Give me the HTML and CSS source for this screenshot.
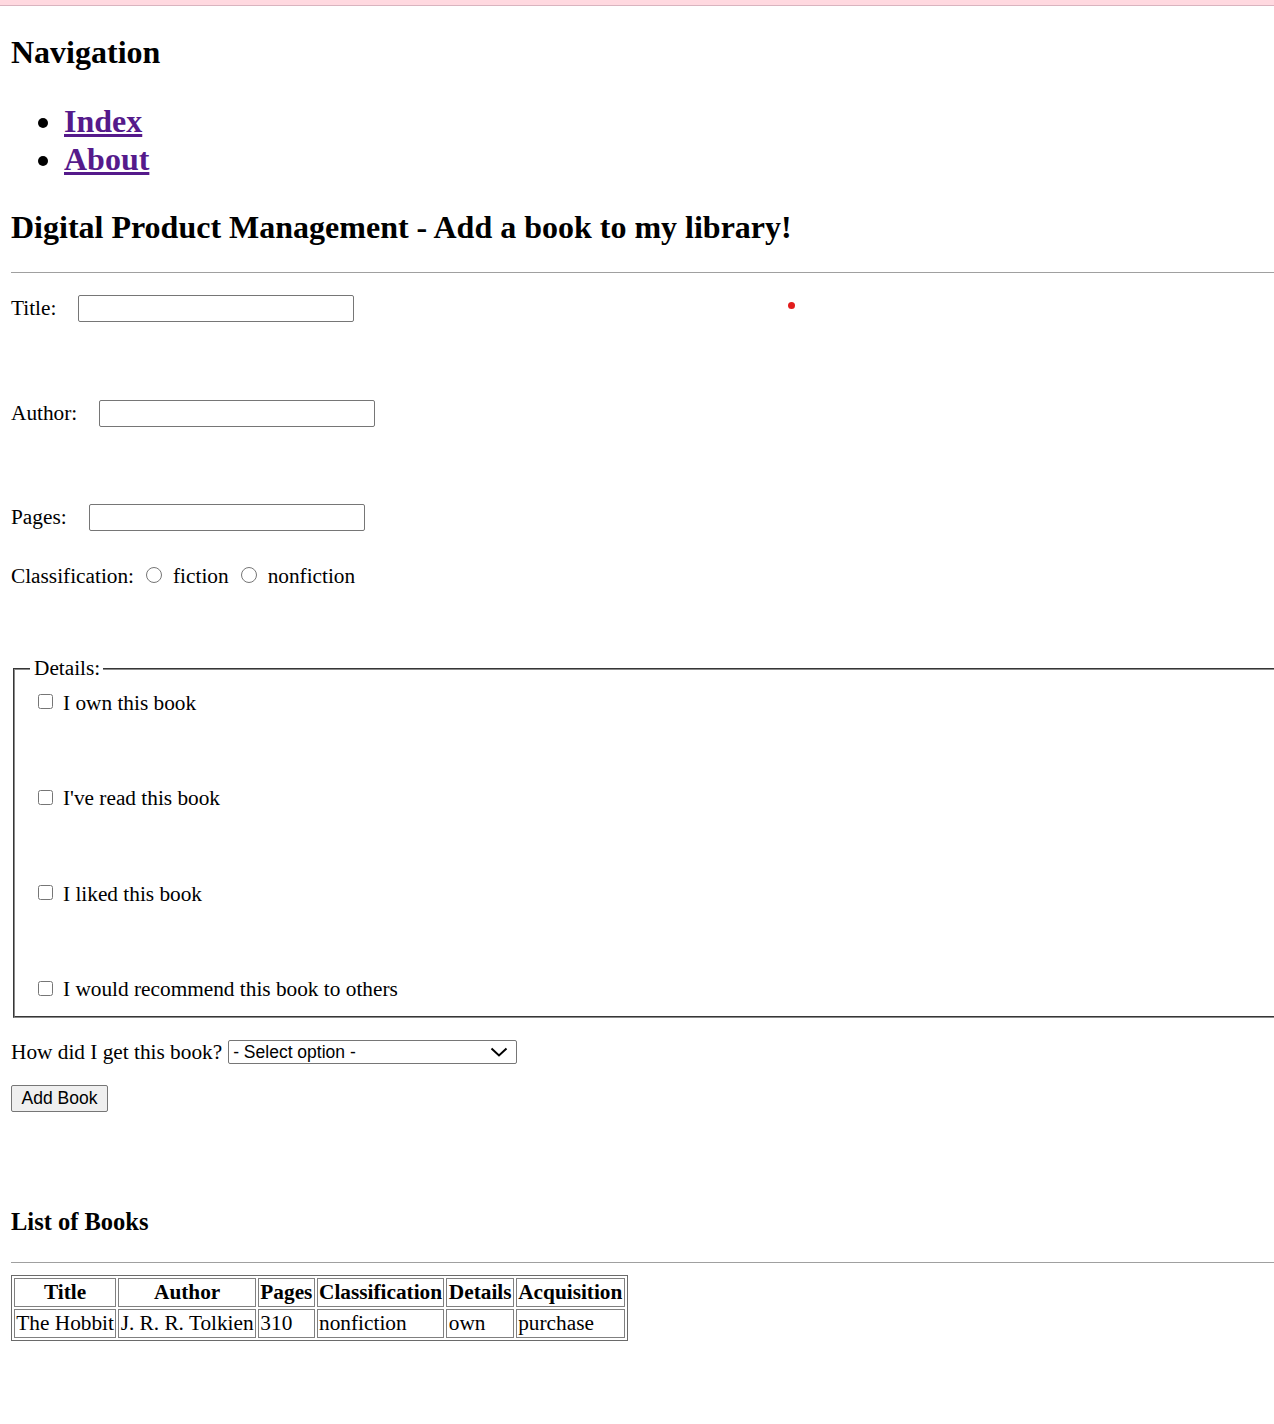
FILE: index.html
```html
<!DOCTYPE html>
<html lang="en">
<head>
<meta charset="utf-8">
<title>Digital Product Management</title>
<link rel="stylesheet" href="styles.css">
</head>
<body>
<div class="topbar"></div>
<main class="page">
  <span class="red-dot"></span>
  <h2 class="nav-title">Navigation</h2>
  <ul class="nav-list">
    <li><a href="#">Index</a></li>
    <li><a href="#">About</a></li>
  </ul>
  <h2 class="page-title">Digital Product Management - Add a book to my library!</h2>
  <hr class="rule rule-top">
  <form class="book-form">
    <div class="field field-title">
      <label class="field-label" for="title">Title:</label>
      <input class="text-input" type="text" id="title">
    </div>
    <div class="field field-author">
      <label class="field-label" for="author">Author:</label>
      <input class="text-input" type="text" id="author">
    </div>
    <div class="field field-pages">
      <label class="field-label" for="pages">Pages:</label>
      <input class="text-input" type="text" id="pages">
    </div>
    <div class="field field-class">
      <span class="class-label">Classification:</span>
      <input class="radio" type="radio" name="cls" id="fiction">
      <label class="radio-label" for="fiction">fiction</label>
      <input class="radio" type="radio" name="cls" id="nonfiction">
      <label class="radio-label" for="nonfiction">nonfiction</label>
    </div>
    <fieldset class="details">
      <legend class="details-legend">Details:</legend>
      <div class="check-row first"><input class="check" type="checkbox" id="own"><label for="own">I own this book</label></div>
      <div class="check-row"><input class="check" type="checkbox" id="read"><label for="read">I've read this book</label></div>
      <div class="check-row"><input class="check" type="checkbox" id="liked"><label for="liked">I liked this book</label></div>
      <div class="check-row"><input class="check" type="checkbox" id="rec"><label for="rec">I would recommend this book to others</label></div>
    </fieldset>
    <div class="field field-select">
      <label class="select-label" for="acq">How did I get this book?</label>
      <span class="select-wrap">
        <select class="select" id="acq"><option>- Select option -</option><option>purchase</option><option>gift</option></select>
        <svg class="select-arrow" width="18" height="10" viewBox="0 0 18 10"><path d="M1.5 1.5 L9 8.5 L16.5 1.5" fill="none" stroke="#000" stroke-width="2"/></svg>
      </span>
    </div>
    <button class="add-btn" type="button">Add Book</button>
  </form>
  <h3 class="list-title">List of Books</h3>
  <hr class="rule rule-bottom">
  <table class="books">
    <thead>
      <tr><th>Title</th><th>Author</th><th>Pages</th><th>Classification</th><th>Details</th><th>Acquisition</th></tr>
    </thead>
    <tbody>
      <tr><td>The Hobbit</td><td>J. R. R. Tolkien</td><td>310</td><td>nonfiction</td><td>own</td><td>purchase</td></tr>
    </tbody>
  </table>
</main>
</body>
</html>
```

FILE: styles.css
```css
html, body {
  overflow-x: hidden;
}
body {
  margin: 0;
  background: #ffffff;
  color: #000000;
  font-family: "Liberation Serif", "Times New Roman", serif;
  font-size: 21.3px;
  line-height: 23px;
}
.topbar {
  height: 5px;
  background: #ffd9e0;
  border-bottom: 1px solid #d9b4bf;
}
.page {
  position: relative;
  padding: 28px 0 60px 11px;
}
.red-dot {
  position: absolute;
  left: 788px;
  top: 296px;
  width: 7px;
  height: 7px;
  border-radius: 50%;
  background: #e21c1c;
}
.nav-title {
  margin: 0;
  font-size: 32px;
  line-height: 37px;
  font-weight: bold;
}
.nav-list {
  margin: 31px 0 0;
  padding-left: 53px;
  font-size: 32px;
  line-height: 38px;
  font-weight: bold;
}
.nav-list a {
  color: #551a8b;
  text-decoration: underline;
}
.page-title {
  margin: 31px 0 0;
  font-size: 32px;
  line-height: 37px;
  font-weight: bold;
}
.rule {
  border: 0;
  border-top: 1px solid #a0a0a0;
  height: 0;
  margin: 0;
}
.rule-top {
  margin-top: 26px;
}
.book-form {
  margin: 22px 0 0;
}
.field {
  display: flex;
  align-items: center;
}
.field-author {
  margin-top: 78px;
}
.field-pages {
  margin-top: 77px;
}
.field-class {
  margin-top: 34px;
}
.field-label {
  margin-right: 22px;
}
.text-input {
  box-sizing: border-box;
  width: 276px;
  height: 27px;
  margin: 0;
  border: 1px solid #767676;
  border-radius: 2px;
  background: #fff;
  font-family: "Liberation Sans", Arial, sans-serif;
  font-size: 17px;
}
.radio {
  width: 16px;
  height: 16px;
  margin: 0 11px 3px 12px;
}
.radio-label {
  display: inline-block;
}
.details {
  margin: 69px -60px 0 2px;
  padding: 0 15px 15px;
  border: 2px groove #c8c8c8;
  border-top-color: #8a8a8a;
  border-left-color: #8a8a8a;
  border-bottom-color: #8a8a8a;
}
.details-legend {
  padding: 0 3px 0 4px;
  line-height: 23px;
}
.check-row {
  display: flex;
  align-items: center;
  margin-top: 72.5px;
}
.check-row.first {
  margin-top: 11.5px;
}
.check {
  width: 15px;
  height: 15px;
  margin: 0 10px 3px 8px;
}
.field-select {
  margin-top: 22px;
}
.select-label {
  margin-right: 6px;
}
.select-wrap {
  position: relative;
  display: inline-block;
}
.select {
  -webkit-appearance: none;
  appearance: none;
  box-sizing: border-box;
  width: 289px;
  height: 24px;
  margin: 0;
  padding: 0 0 0 4px;
  border: 1px solid #767676;
  border-radius: 2px;
  background: #fff;
  color: #000;
  font-family: "Liberation Sans", Arial, sans-serif;
  font-size: 17.5px;
  line-height: 22px;
}
.select-arrow {
  position: absolute;
  right: 9px;
  top: 7px;
  pointer-events: none;
}
.add-btn {
  display: block;
  box-sizing: border-box;
  width: 97px;
  height: 27px;
  margin: 21px 0 0;
  padding: 0;
  border: 1px solid #767676;
  border-radius: 2px;
  background: #efefef;
  color: #000;
  font-family: "Liberation Sans", Arial, sans-serif;
  font-size: 17.5px;
}
.list-title {
  margin: 96px 0 0;
  font-size: 24.5px;
  line-height: 28px;
  font-weight: bold;
}
.rule-bottom {
  margin-top: 26px;
}
.books {
  margin-top: 12px;
  border: 1px solid #6a6a6a;
  border-spacing: 2px;
  font-size: 21.3px;
  line-height: 23px;
}
.books th,
.books td {
  border: 1px solid #808080;
  padding: 2px 1.35px;
}
.books th {
  font-weight: bold;
  text-align: center;
}
.books td {
  text-align: left;
}
```
